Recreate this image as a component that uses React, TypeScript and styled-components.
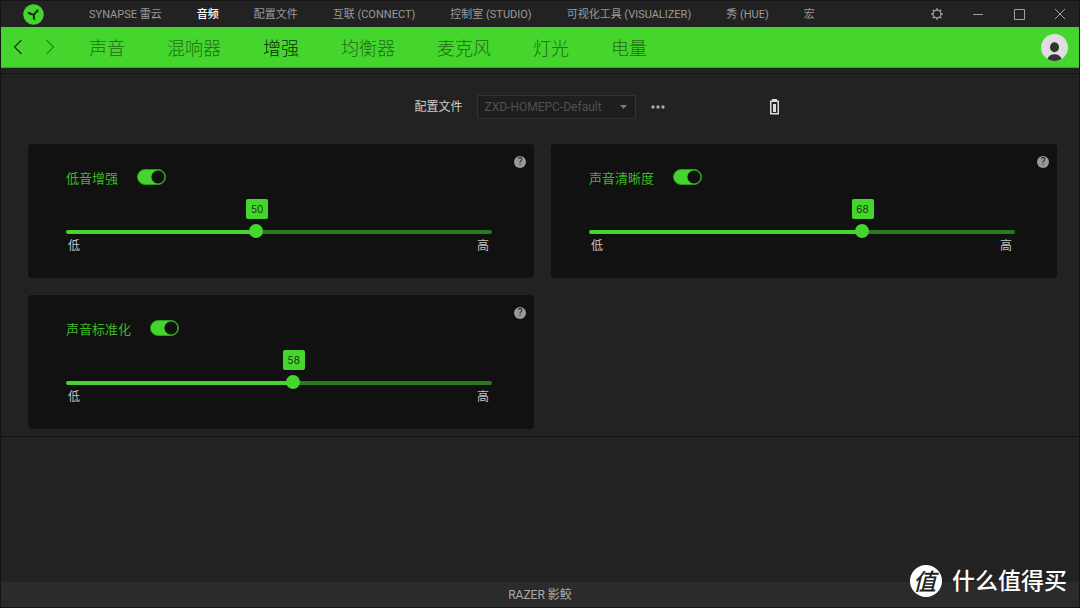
import React, { useState } from "react";
import styled, { createGlobalStyle } from "styled-components";

const GREEN = "#44d62c";
const CJK = `"Noto Sans CJK SC", sans-serif`;

const GlobalStyle = createGlobalStyle`
  * { box-sizing: border-box; }
  html, body { margin: 0; background: #222; }
  body { font-family: Roboto, ${CJK}; color: #aaa; font-size: 11px; }
  button, select, input { font: inherit; color: inherit; margin: 0; }
  button { background: none; border: 0; padding: 0; cursor: pointer; }
  svg { display: block; }
`;

const Window = styled.div`
  position: relative;
  display: flex;
  flex-direction: column;
  min-height: 100vh;
  background: #222;
  border: 1px solid #141414;
`;

const TitleBar = styled.header`
  display: flex;
  align-items: center;
  height: 26px;
  padding: 0 12px 0 22px;
`;

const ModuleNav = styled.nav`
  display: flex;
  flex: 1;
  gap: 35px;
  margin-left: 45px;
`;

const ModuleLink = styled.a<{ $active?: boolean }>`
  color: ${(p) => (p.$active ? "#fff" : "#9a9a9a")};
  font-weight: ${(p) => (p.$active ? 500 : 400)};
  line-height: 16px;
  padding-top: 2px;
  text-decoration: none;
  white-space: nowrap;
`;

const WindowControls = styled.div`
  display: flex;
  gap: 27px;
  color: #a0a0a0;
`;

const TabBar = styled.div`
  display: flex;
  align-items: center;
  height: 41px;
  padding: 0 11px 0 9px;
  background: ${GREEN};
  border-bottom: 1px solid #39a827;
`;

const ArrowButton = styled.button`
  width: 16px;
  margin-right: 16px;
  color: #16350f;
  &:disabled { color: #2b8a1c; }
`;

const TabNav = styled.nav`
  display: flex;
  flex: 1;
  gap: 42px;
  margin-left: 15px;
`;

const TabLink = styled.a<{ $active?: boolean }>`
  color: ${(p) => (p.$active ? "#10280b" : "#226b16")};
  font-family: ${CJK};
  font-size: 18px;
  font-weight: 300;
  line-height: 26px;
  text-decoration: none;
  white-space: nowrap;
`;

const Main = styled.main`
  flex: 1;
`;

const Panel = styled.section`
  margin-top: 5px;
  padding-bottom: 7px;
  border-top: 1px dotted #0c0c0c;
  border-bottom: 1px dotted #0c0c0c;
`;

const ProfileRow = styled.div`
  display: flex;
  align-items: center;
  justify-content: center;
  height: 70px;
  padding: 0 0 4px 113px;
`;

const ProfileLabel = styled.label`
  margin-right: 14px;
  color: #ccc;
  font-size: 12px;
  line-height: 16px;
`;

const SelectBox = styled.div`
  display: grid;
  align-items: center;
  & > * { grid-area: 1 / 1; }
  & > svg { justify-self: end; margin-right: 9px; pointer-events: none; }
`;

const ProfileSelect = styled.select`
  appearance: none;
  width: 159px;
  height: 24px;
  padding: 0 24px 0 7px;
  background: #1e1e1e;
  border: 1px solid #333;
  border-radius: 1px;
  color: #505050;
  font-size: 12px;
`;

const MoreButton = styled.button`
  margin: 0 105px 0 15px;
`;

const CardGrid = styled.div`
  display: grid;
  grid-template-columns: 1fr 1fr;
  gap: 17px;
  padding: 0 22px 0 27px;
`;

const CardBox = styled.article`
  display: grid;
  grid-template-columns: 1fr auto;
  height: 134px;
  padding: 12px 8px 0 38px;
  background: #111;
  border-radius: 4px;
`;

const CardBody = styled.div`
  padding: 12px 22px 0 0;
`;

const CardHead = styled.div`
  display: flex;
  gap: 19px;
`;

const CardTitle = styled.label`
  color: ${GREEN};
  font-family: ${CJK};
  font-size: 13px;
  line-height: 20px;
  opacity: 0.85;
`;

const Toggle = styled.input`
  appearance: none;
  width: 29px;
  height: 16px;
  margin-top: 1px;
  border-radius: 8px;
  border: 1px solid #2f9a1f;
  background: radial-gradient(circle at 20px 7px, #111 6px, transparent 7px), #2a2a2a;
  cursor: pointer;
  &:checked {
    background: radial-gradient(circle at 20px 7px, #111 6px, transparent 7px), ${GREEN};
  }
`;

const SliderBox = styled.div`
  position: relative;
  padding-top: 36px;
`;

const Range = styled.input<{ $fill: string }>`
  appearance: none;
  display: block;
  width: 100%;
  height: 14px;
  background: transparent;
  cursor: pointer;
  &::-webkit-slider-runnable-track {
    height: 4px;
    margin-top: 2px;
    border-radius: 2px;
    background: linear-gradient(to right, ${GREEN} ${(p) => p.$fill}, #2a7a1f ${(p) => p.$fill});
  }
  &::-webkit-slider-thumb {
    appearance: none;
    width: 14px;
    height: 14px;
    margin-top: -6px;
    border-radius: 50%;
    background: ${GREEN};
  }
`;

const Bubble = styled.output`
  position: absolute;
  top: 11px;
  width: 22px;
  margin-left: -10px;
  border-radius: 2px;
  background: ${GREEN};
  color: #17380f;
  font-family: Inter, sans-serif;
  font-size: 10px;
  line-height: 20px;
  text-align: center;
`;

const Scale = styled.div`
  display: flex;
  justify-content: space-between;
  padding: 0 3px 0 2px;
  color: #c4c4c4;
  font-family: ${CJK};
  font-size: 12px;
  line-height: 14px;
`;

const HelpButton = styled.button`
  width: 12px;
  height: 12px;
  border-radius: 50%;
  background: #999;
  color: #111;
  font-family: Roboto, sans-serif;
  font-size: 10px;
  line-height: 12px;
`;

const Footer = styled.footer`
  height: 25px;
  background: #2b2b2b;
  color: #aaa;
  font-size: 12px;
  line-height: 26px;
  text-align: center;
`;

const Watermark = styled.div`
  position: absolute;
  right: 12px;
  bottom: 10px;
  display: flex;
  align-items: center;
  gap: 10px;
  color: #fff;
  font-family: ${CJK};
  font-size: 23px;
  font-weight: 500;
  line-height: 28px;
`;

const WatermarkBadge = styled.span`
  width: 32px;
  height: 32px;
  border-radius: 50%;
  background: #fff;
  color: #222;
  font-style: italic;
  line-height: 30px;
  padding-right: 3px;
  text-align: center;
`;

const WatermarkText = styled.span`
  padding-bottom: 4px;
`;

const Logo = () => (
  <svg width="21" height="21" viewBox="0 0 21 21" aria-hidden="true">
    <circle cx="10.5" cy="10.5" r="10.3" fill={GREEN} />
    <g fill="none" stroke="#17300f" strokeLinecap="round">
      <path d="M10.8 10.9 L6 8.8 M10.8 10.9 L14.2 6.6 M10.8 10.9 L11.2 15" strokeWidth="1.9" />
      <path d="M14.8 5.6 L14.9 8.2 M5 9 L7.6 10.8 M10 14 L12 15.6" strokeWidth="1" />
    </g>
  </svg>
);

const GearIcon = () => (
  <svg width="14" height="14" viewBox="0 0 14 14" fill="none" stroke="currentColor" aria-hidden="true">
    <circle cx="7" cy="7" r="3.9" strokeWidth="1.2" />
    <path
      d="M7 3V1.2M7 11v1.8M3 7H1.2M11 7h1.8M4.2 4.2L2.9 2.9M9.8 4.2l1.3-1.3M4.2 9.8l-1.3 1.3M9.8 9.8l1.3 1.3"
      strokeWidth="1.5"
    />
  </svg>
);

const ControlIcon = ({ d }: { d: string }) => (
  <svg width="14" height="14" viewBox="0 0 14 14" fill="none" stroke="currentColor" aria-hidden="true">
    <path d={d} />
  </svg>
);

const Chevron = ({ d }: { d: string }) => (
  <svg width="16" height="16" viewBox="0 0 16 16" fill="none" stroke="currentColor" strokeWidth="1.2" aria-hidden="true">
    <path d={d} />
  </svg>
);

const Avatar = () => (
  <svg width="27" height="27" viewBox="0 0 27 27" aria-hidden="true">
    <circle cx="13.5" cy="13.5" r="13.5" fill="#dedede" />
    <ellipse cx="13.5" cy="13.2" rx="4.5" ry="5" fill="#333" />
    <path d="M6.4 25 Q8 20.2 13.5 20.2 T20.6 25 Q13.5 29 6.4 25Z" fill="#333" />
  </svg>
);

const Battery = () => (
  <svg width="9" height="16" viewBox="0 0 9 16" role="img" aria-label="电池">
    <path d="M2 0h5v2H2z" fill="#ddd" />
    <path d="M0.75 2.25h7.5v12.5h-7.5z" fill="none" stroke="#ddd" strokeWidth="1.5" />
    <path d="M3 5h3v8H3z" fill="#ddd" />
  </svg>
);

const modules = [
  "SYNAPSE 雷云",
  "音频",
  "配置文件",
  "互联 (CONNECT)",
  "控制室 (STUDIO)",
  "可视化工具 (VISUALIZER)",
  "秀 (HUE)",
  "宏",
];
const tabs = ["声音", "混响器", "增强", "均衡器", "麦克风", "灯光", "电量"];
const effects = [
  { id: "bass", title: "低音增强", value: 50 },
  { id: "clarity", title: "声音清晰度", value: 68 },
  { id: "normalize", title: "声音标准化", value: 58 },
];

const MIN = 10;
const MAX = 100;

function EffectCard({ id, title, value: initial }: { id: string; title: string; value: number }) {
  const [value, setValue] = useState(initial);
  const [on, setOn] = useState(true);
  const ratio = (value - MIN) / (MAX - MIN);
  return (
    <CardBox>
      <CardBody>
        <CardHead>
          <CardTitle htmlFor={id}>{title}</CardTitle>
          <Toggle id={id} type="checkbox" checked={on} onChange={(e) => setOn(e.target.checked)} />
        </CardHead>
        <SliderBox>
          <Bubble style={{ left: `calc(7px + (100% - 14px) * ${ratio})` }}>{value}</Bubble>
          <Range
            type="range"
            aria-label={title}
            min={MIN}
            max={MAX}
            value={value}
            $fill={`${ratio * 100}%`}
            onChange={(e) => setValue(Number(e.target.value))}
          />
        </SliderBox>
        <Scale>
          <span>低</span>
          <span>高</span>
        </Scale>
      </CardBody>
      <HelpButton type="button">?</HelpButton>
    </CardBox>
  );
}

export default function App() {
  return (
    <Window>
      <GlobalStyle />
      <TitleBar>
        <Logo />
        <ModuleNav>
          {modules.map((m) => (
            <ModuleLink key={m} href="#" $active={m === "音频"}>
              {m}
            </ModuleLink>
          ))}
        </ModuleNav>
        <WindowControls>
          <button type="button" aria-label="设置"><GearIcon /></button>
          <button type="button" aria-label="最小化"><ControlIcon d="M2 7.5h10" /></button>
          <button type="button" aria-label="最大化"><ControlIcon d="M2.5 2.5h10v10h-10z" /></button>
          <button type="button" aria-label="关闭"><ControlIcon d="M2 2l10 10M12 2L2 12" /></button>
        </WindowControls>
      </TitleBar>
      <TabBar>
        <ArrowButton type="button" aria-label="后退"><Chevron d="M11.5 1L4.5 8l7 7" /></ArrowButton>
        <ArrowButton type="button" aria-label="前进" disabled><Chevron d="M4.5 1l7 7-7 7" /></ArrowButton>
        <TabNav>
          {tabs.map((t) => (
            <TabLink key={t} href="#" $active={t === "增强"}>
              {t}
            </TabLink>
          ))}
        </TabNav>
        <button type="button" aria-label="账户"><Avatar /></button>
      </TabBar>
      <Main>
        <Panel>
          <ProfileRow>
            <ProfileLabel htmlFor="profile">配置文件</ProfileLabel>
            <SelectBox>
              <ProfileSelect id="profile">
                <option>ZXD-HOMEPC-Default</option>
              </ProfileSelect>
              <svg width="7" height="4" viewBox="0 0 7 4" aria-hidden="true">
                <path d="M0 0h7L3.5 4z" fill="#777" />
              </svg>
            </SelectBox>
            <MoreButton type="button" aria-label="更多">
              <svg width="14" height="4" viewBox="0 0 14 4" fill="#aaa" aria-hidden="true">
                <circle cx="2" cy="2" r="1.7" />
                <circle cx="7" cy="2" r="1.7" />
                <circle cx="12" cy="2" r="1.7" />
              </svg>
            </MoreButton>
            <Battery />
          </ProfileRow>
          <CardGrid>
            {effects.map((e) => (
              <EffectCard key={e.id} {...e} />
            ))}
          </CardGrid>
        </Panel>
      </Main>
      <Footer>RAZER 影鲛</Footer>
      <Watermark>
        <WatermarkBadge>值</WatermarkBadge>
        <WatermarkText>什么值得买</WatermarkText>
      </Watermark>
    </Window>
  );
}
